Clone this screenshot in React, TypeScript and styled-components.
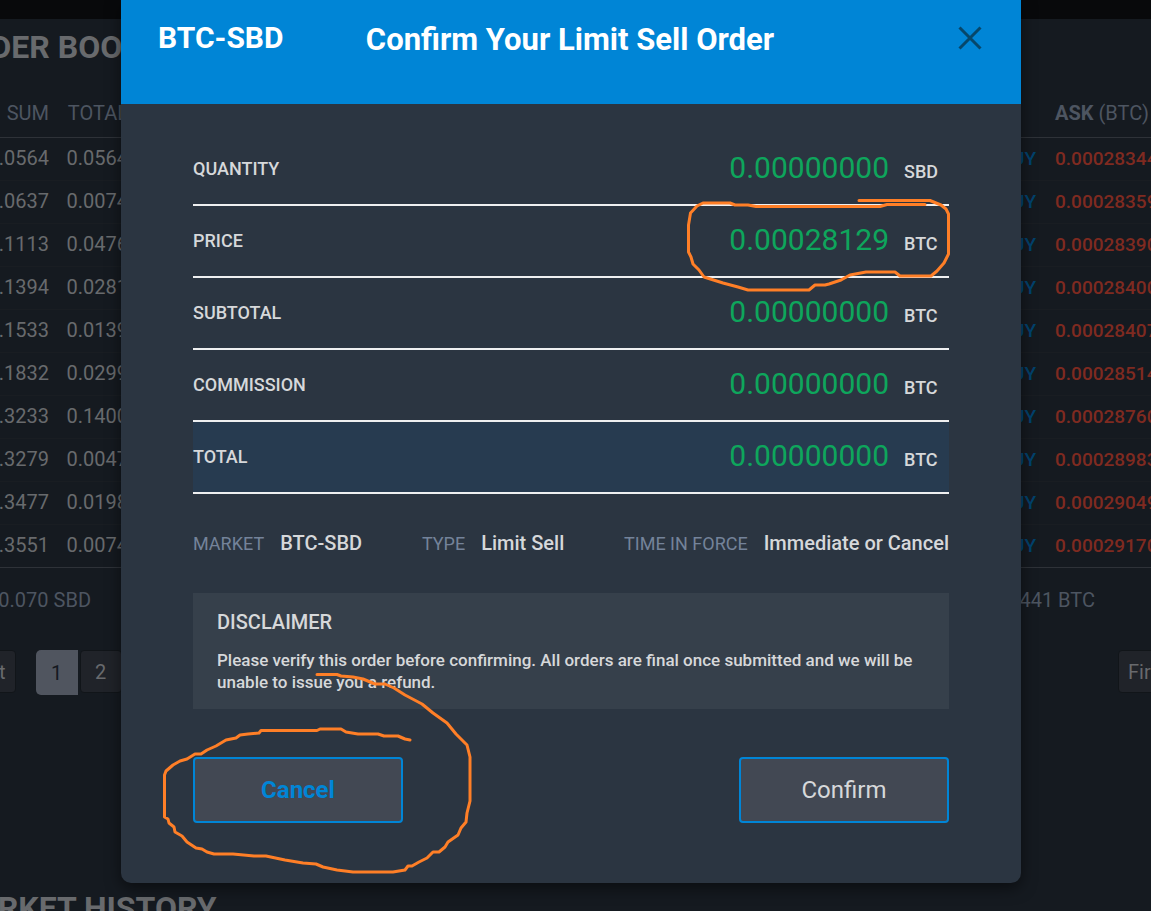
import React from "react";
import styled, { createGlobalStyle } from "styled-components";

const font = `Roboto, "Liberation Sans", sans-serif`;

const GlobalStyle = createGlobalStyle`
  *, *::before, *::after { box-sizing: border-box; }
  body { margin: 0; background: #151a20; font-family: ${font}; }
  button { font-family: inherit; cursor: pointer; }
`;

const Page = styled.div`
  position: relative;
  height: 100vh;
  overflow: hidden;
  background: #151a20;
  color: #686a6d;
`;

const TopBar = styled.header`
  height: 19px;
  background: #08090b;
`;

const Columns = styled.main`
  display: flex;
  justify-content: space-between;
`;

const Panel = styled.section<{ $side: "bid" | "ask" }>`
  width: ${(p) => (p.$side === "bid" ? "50%" : "160px")};
  margin-left: ${(p) => (p.$side === "bid" ? "-52px" : "0")};
  overflow: hidden;
  white-space: nowrap;
`;

const Heading = styled.h2`
  height: 69px;
  margin: 0;
  font-size: 32px;
  line-height: 56px;
  font-weight: 700;
`;

const BookTable = styled.table`
  width: 100%;
  table-layout: fixed;
  border-spacing: 0;
  font-size: 20px;
  tbody tr:last-child td { border-bottom-color: #2e3238; }
`;

const HeadCell = styled.th<{ $width?: number }>`
  width: ${(p) => (p.$width ? `${p.$width}px` : "auto")};
  height: 50px;
  padding: 0;
  border-bottom: 1px solid #2e3238;
  color: #4d5561;
  font-weight: 400;
  text-align: right;
`;

const AskHead = styled(HeadCell)`
  padding-left: 19px;
  text-align: left;
`;

const BookCell = styled.td`
  height: 43px;
  padding: 0 0 2px;
  border-bottom: 1px solid #191d22;
  color: #686a6d;
  text-align: right;
`;

const BuyCell = styled(BookCell)`
  color: #02426d;
  font-size: 19px;
  font-weight: 500;
`;

const AskCell = styled(BookCell)`
  padding-left: 19px;
  color: #7f2a20;
  font-size: 19px;
  font-weight: 500;
  text-align: left;
`;

const Sum = styled.p<{ $width: number }>`
  width: ${(p) => p.$width}px;
  margin: 0;
  font-size: 20px;
  line-height: 64px;
  color: #4d5561;
  text-align: right;
`;

const Pager = styled.nav<{ $indent: number }>`
  display: flex;
  align-items: flex-start;
  height: 45px;
  margin: 18px 0 185px;
  padding-left: ${(p) => p.$indent}px;
`;

const PageButton = styled.button<{ $gap?: number }>`
  flex: none;
  height: 43px;
  min-width: 42px;
  margin-right: ${(p) => p.$gap ?? 2}px;
  padding: 0 9px;
  border: 1px solid #111519;
  border-radius: 4px;
  background: #202329;
  color: #686a6d;
  font-size: 20px;
`;

const CurrentPageButton = styled(PageButton)`
  height: 45px;
  border: 0;
  border-radius: 5px 0 0 5px;
  background: #50555f;
  color: #15191f;
`;

const Overlay = styled.div`
  position: absolute;
  inset: 0;
  display: flex;
  justify-content: center;
  align-items: flex-start;
  padding-right: 9px;
`;

const Dialog = styled.div`
  position: relative;
  width: 900px;
  max-width: 100%;
  overflow: hidden;
  border-radius: 0 0 10px 10px;
  background: #2b3541;
  color: #d6d8da;
  box-shadow: 0 5px 15px rgba(0, 0, 0, 0.5);
`;

const DialogHeader = styled.div`
  display: grid;
  grid-template-columns: 1fr auto 1fr;
  align-items: center;
  height: 104px;
  padding: 0 39px 29px 37px;
  background: #0085d6;
  color: #fff;
`;

const MarketName = styled.strong`
  font-size: 30px;
  font-weight: 700;
`;

const Title = styled.h1`
  margin: 0;
  padding-top: 4px;
  font-size: 31px;
  font-weight: 700;
`;

const CloseButton = styled.button`
  justify-self: end;
  display: flex;
  padding: 0;
  border: 0;
  background: none;
  color: #06476b;
`;

const DialogBody = styled.div`
  padding: 30px 72px 60px;
`;

const OrderTable = styled.table`
  width: 100%;
  border-spacing: 0;
`;

const OrderRow = styled.tr<{ $total?: boolean }>`
  height: 72px;
  background: ${(p) => (p.$total ? "#273b50" : "transparent")};
  th, td { border-bottom: 2px solid #eeeff0; }
`;

const OrderLabel = styled.th`
  padding: 0 0 2px;
  font-size: 18px;
  font-weight: 500;
  text-align: left;
`;

const OrderCell = styled.td`
  padding: 0 0 4px;
`;

const OrderValue = styled.div`
  display: flex;
  justify-content: flex-end;
  align-items: baseline;
  gap: 15px;
`;

const Amount = styled.span`
  color: #0ea65c;
  font-size: 30px;
`;

const Unit = styled.span`
  width: 45px;
  font-size: 18px;
  font-weight: 500;
`;

const Facts = styled.dl`
  display: flex;
  justify-content: space-between;
  margin: 0;
  height: 99px;
  line-height: 99px;
`;

const Fact = styled.div`
  display: flex;
  gap: 16px;
  dt { color: #74839a; font-size: 18px; }
  dd { margin: 0; font-size: 20px; font-weight: 500; }
`;

const Disclaimer = styled.section`
  min-height: 116px;
  padding: 16px 24px;
  background: #36404b;
  h2 { margin: 0 0 14px; font-size: 20px; line-height: 26px; font-weight: 500; }
  p { margin: 0; font-size: 17px; line-height: 22px; font-weight: 500; }
`;

const Actions = styled.div`
  display: flex;
  justify-content: space-between;
  margin-top: 48px;
`;

const ActionButton = styled.button<{ $accent?: boolean }>`
  width: 210px;
  height: 66px;
  border: 2px solid #0085d6;
  border-radius: 4px;
  background: #424853;
  color: ${(p) => (p.$accent ? "#0085d6" : "#d6d8da")};
  font-size: 24px;
  font-weight: ${(p) => (p.$accent ? 700 : 400)};
`;

const Marks = styled.svg`
  position: absolute;
  top: 0;
  left: 0;
  pointer-events: none;
`;

const bids = [
  ["0.0564", "0.0564"], ["0.0637", "0.0074"], ["0.1113", "0.0476"], ["0.1394", "0.0281"],
  ["0.1533", "0.0139"], ["0.1832", "0.0299"], ["0.3233", "0.1400"], ["0.3279", "0.0047"],
  ["0.3477", "0.0198"], ["0.3551", "0.0074"],
];

const asks = [
  "0.00028344", "0.00028359", "0.00028390", "0.00028400", "0.00028407",
  "0.00028514", "0.00028760", "0.00028983", "0.00029049", "0.00029170",
];

const order = [
  ["QUANTITY", "0.00000000", "SBD"],
  ["PRICE", "0.00028129", "BTC"],
  ["SUBTOTAL", "0.00000000", "BTC"],
  ["COMMISSION", "0.00000000", "BTC"],
  ["TOTAL", "0.00000000", "BTC"],
];

const facts = [
  ["MARKET", "BTC-SBD"],
  ["TYPE", "Limit Sell"],
  ["TIME IN FORCE", "Immediate or Cancel"],
];

export default function App() {
  return (
    <Page>
      <GlobalStyle />
      <TopBar />
      <Columns>
        <Panel $side="bid">
          <Heading>ORDER BOOK</Heading>
          <BookTable>
            <thead>
              <tr>
                <HeadCell $width={101}>SUM</HeadCell>
                <HeadCell $width={79}>TOTAL</HeadCell>
                <HeadCell />
              </tr>
            </thead>
            <tbody>
              {bids.map(([sum, total]) => (
                <tr key={sum}>
                  <BookCell>{sum}</BookCell>
                  <BookCell>{total}</BookCell>
                  <BookCell />
                </tr>
              ))}
            </tbody>
          </BookTable>
          <Sum $width={143}>0.070 SBD</Sum>
          <Pager $indent={8} aria-label="Bid pages">
            <PageButton $gap={20}>First</PageButton>
            <CurrentPageButton aria-current="page">1</CurrentPageButton>
            <PageButton>2</PageButton>
          </Pager>
          <Heading>MARKET HISTORY</Heading>
        </Panel>
        <Panel $side="ask">
          <Heading />
          <BookTable>
            <thead>
              <tr>
                <HeadCell $width={45} />
                <AskHead><b>ASK</b> (BTC)</AskHead>
              </tr>
            </thead>
            <tbody>
              {asks.map((ask) => (
                <tr key={ask}>
                  <BuyCell>BUY</BuyCell>
                  <AskCell>{ask}</AskCell>
                </tr>
              ))}
            </tbody>
          </BookTable>
          <Sum $width={104}>0.441 BTC</Sum>
          <Pager $indent={127} aria-label="Ask pages">
            <PageButton>First</PageButton>
          </Pager>
        </Panel>
      </Columns>
      <Overlay>
        <Dialog role="dialog" aria-modal="true" aria-labelledby="dialog-title">
          <DialogHeader>
            <MarketName>BTC-SBD</MarketName>
            <Title id="dialog-title">Confirm Your Limit Sell Order</Title>
            <CloseButton aria-label="Close">
              <svg width="24" height="24" viewBox="0 0 24 24" fill="none" stroke="currentColor" strokeWidth="3">
                <path d="M1.5 1.5 22.5 22.5M22.5 1.5 1.5 22.5" />
              </svg>
            </CloseButton>
          </DialogHeader>
          <DialogBody>
            <OrderTable>
              <tbody>
                {order.map(([label, amount, unit]) => (
                  <OrderRow key={label} $total={label === "TOTAL"}>
                    <OrderLabel scope="row">{label}</OrderLabel>
                    <OrderCell>
                      <OrderValue>
                        <Amount>{amount}</Amount>
                        <Unit>{unit}</Unit>
                      </OrderValue>
                    </OrderCell>
                  </OrderRow>
                ))}
              </tbody>
            </OrderTable>
            <Facts>
              {facts.map(([name, value]) => (
                <Fact key={name}>
                  <dt>{name}</dt>
                  <dd>{value}</dd>
                </Fact>
              ))}
            </Facts>
            <Disclaimer>
              <h2>DISCLAIMER</h2>
              <p>
                Please verify this order before confirming. All orders are final once submitted and we will be
                unable to issue you a refund.
              </p>
            </Disclaimer>
            <Actions>
              <ActionButton $accent>Cancel</ActionButton>
              <ActionButton>Confirm</ActionButton>
            </Actions>
          </DialogBody>
          <Marks width="900" height="883" viewBox="121 0 900 883" fill="none" stroke="#ff7f27" strokeWidth="3" strokeLinecap="round" strokeLinejoin="round" aria-hidden="true">
            <path d="M859 200.500H930L936 203L941 205L946 209L948.500 214V254L944 263L937 271L931 276H900L895 272L866 272L850 275L841 280L829 284L825 285H815L809 290H748L738 287L723 283L704 277L699 270L693 264L691 257L688.500 252V225L690.500 213L697 206L703 203H730L735 205H748L756 206.500H880L887 204.500H925" />
            <path d="M317 674.500H337L341 676L353 677L363 679L375 684H385L394 688L405 695L422 704L433 713L447 723L456 734L467 745L470 757V801L467 813L466 822L461 828L458 835L448 842L445 847L439 852H433L427 858L419 862L412 866H408L405 870L393 872H353L337 870L323 867L316 864L303 863L285 860L266 856H254L233 854L214 854L207 852L202 849L196 848L187 842L182 836L175 832L174 827L169 823L168 819L164.500 817V775L166 771L173 765L180 761L187 759L195 754H201L207 750L216 746L226 740L236 738L240 735L248 734L259 733L261 730.500H317L320 729H341L346 732L358 734H378L384 736H398L405 739L410 740" />
          </Marks>
        </Dialog>
      </Overlay>
    </Page>
  );
}
